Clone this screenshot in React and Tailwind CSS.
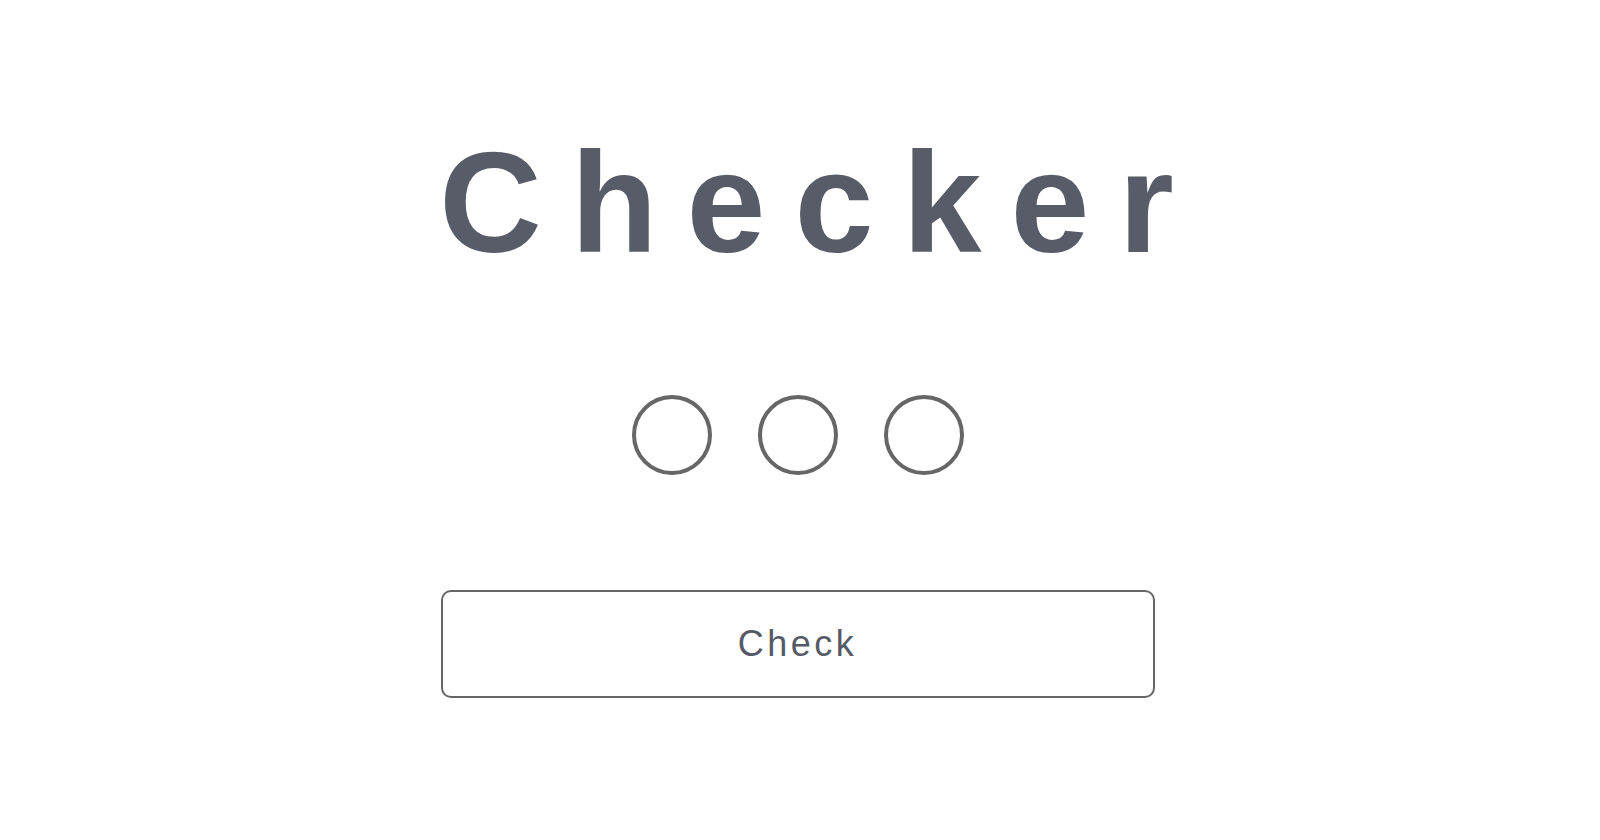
export default function App() {
  return (
    <div className="min-h-screen w-full bg-white flex flex-col items-center" style={{ fontFamily: '"Liberation Sans", Arial, sans-serif' }}>
      <h1 className="mt-[132px] h-[142px] text-[142px] leading-none font-bold tracking-[29px] pl-[42px] text-[#585c68]">
        Checker
      </h1>
      <div className="mt-[121px] flex gap-[46px] pr-[4px]">
        <div className="h-[80px] w-[80px] rounded-full border-[4px] border-[#666666]" />
        <div className="h-[80px] w-[80px] rounded-full border-[4px] border-[#666666]" />
        <div className="h-[80px] w-[80px] rounded-full border-[4px] border-[#666666]" />
      </div>
      <button className="mt-[115px] mr-[5px] h-[108px] w-[714px] rounded-[10px] border-2 border-[#666666] bg-white text-[36px] tracking-[3.5px] text-[#555a66]">
        Check
      </button>
    </div>
  );
}
